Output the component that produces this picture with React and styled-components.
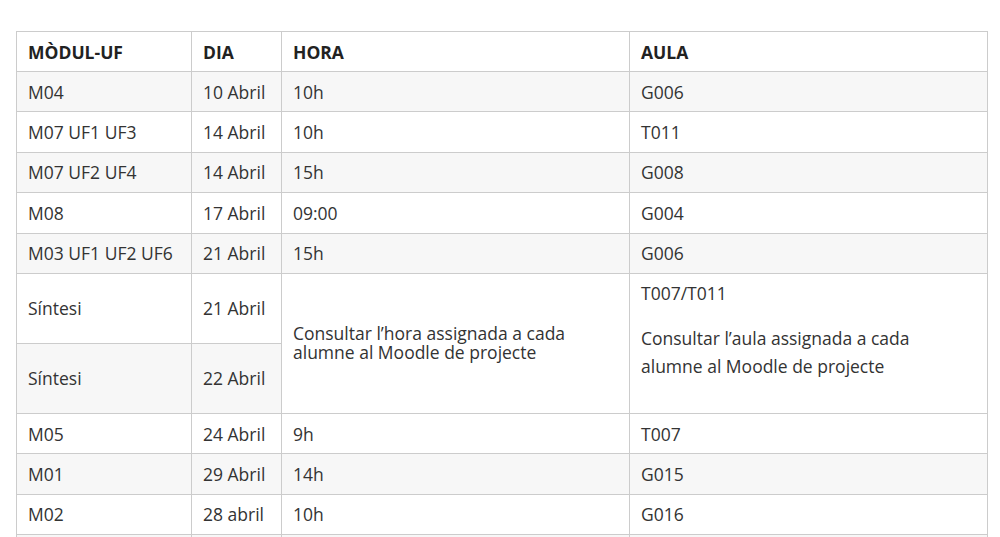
import React from 'react'
import styled, { createGlobalStyle } from 'styled-components'

const GlobalStyle = createGlobalStyle`
  html, body {
    margin: 0;
    padding: 0;
    background: #ffffff;
  }
  body {
    font-family: 'Open Sans', 'Liberation Sans', sans-serif;
    color: #333333;
  }
`

const Page = styled.div`
  padding: 31px 13px 0 16px;
`

const Table = styled.table`
  width: 971px;
  border-collapse: collapse;
  table-layout: fixed;
  font-size: 17.5px;

  th, td {
    border: 1px solid #cccccc;
    padding: 0 11px;
    text-align: left;
    vertical-align: middle;
  }

  th {
    font-weight: 700;
    color: #222222;
    height: 39px;
    line-height: 24px;
  }

  tbody tr:nth-child(odd) td {
    background-color: #f7f7f7;
  }
`

const Row = styled.tr`
  height: ${p => (p.$tall ? '70px' : '40.4px')};
`

const Cell = styled.td`
  background-color: #ffffff;
  line-height: ${p => (p.$tight ? '19px' : '24px')};
`

const RoomCell = styled.td`
  background-color: #ffffff !important;
  vertical-align: top !important;
  padding: 5px 40px 0 11px !important;
  line-height: 28px;

  p {
    margin: 0 0 17px;
  }
`

const rowsTop = [
  ['M04', '10 Abril', '10h', 'G006'],
  ['M07 UF1 UF3', '14 Abril', '10h', 'T011'],
  ['M07 UF2 UF4', '14 Abril', '15h', 'G008'],
  ['M08', '17 Abril', '09:00', 'G004'],
  ['M03 UF1 UF2 UF6', '21 Abril', '15h', 'G006'],
]

const rowsBottom = [
  ['M05', '24 Abril', '9h', 'T007'],
  ['M01', '29 Abril', '14h', 'G015'],
  ['M02', '28 abril', '10h', 'G016'],
]

function App() {
  return (
    <Page>
      <GlobalStyle />
      <Table>
        <colgroup>
          <col style={{ width: 175 }} />
          <col style={{ width: 90 }} />
          <col style={{ width: 348 }} />
          <col style={{ width: 358 }} />
        </colgroup>
        <thead>
          <tr>
            <th>MÒDUL-UF</th>
            <th>DIA</th>
            <th>HORA</th>
            <th>AULA</th>
          </tr>
        </thead>
        <tbody>
          {rowsTop.map(r => (
            <Row key={r[0]}>
              {r.map((c, i) => <Cell key={i}>{c}</Cell>)}
            </Row>
          ))}
          <Row $tall>
            <Cell>Síntesi</Cell>
            <Cell>21 Abril</Cell>
            <Cell rowSpan={2} $tight>
              Consultar l’hora assignada a cada alumne al Moodle de projecte
            </Cell>
            <RoomCell rowSpan={2}>
              <p>T007/T011</p>
              <p>Consultar l’aula assignada a cada alumne al Moodle de projecte</p>
            </RoomCell>
          </Row>
          <Row $tall>
            <Cell>Síntesi</Cell>
            <Cell>22 Abril</Cell>
          </Row>
          {rowsBottom.map(r => (
            <Row key={r[0]}>
              {r.map((c, i) => <Cell key={i}>{c}</Cell>)}
            </Row>
          ))}
          <Row>
            <Cell />
            <Cell />
            <Cell />
            <Cell />
          </Row>
        </tbody>
      </Table>
    </Page>
  )
}

export default App
